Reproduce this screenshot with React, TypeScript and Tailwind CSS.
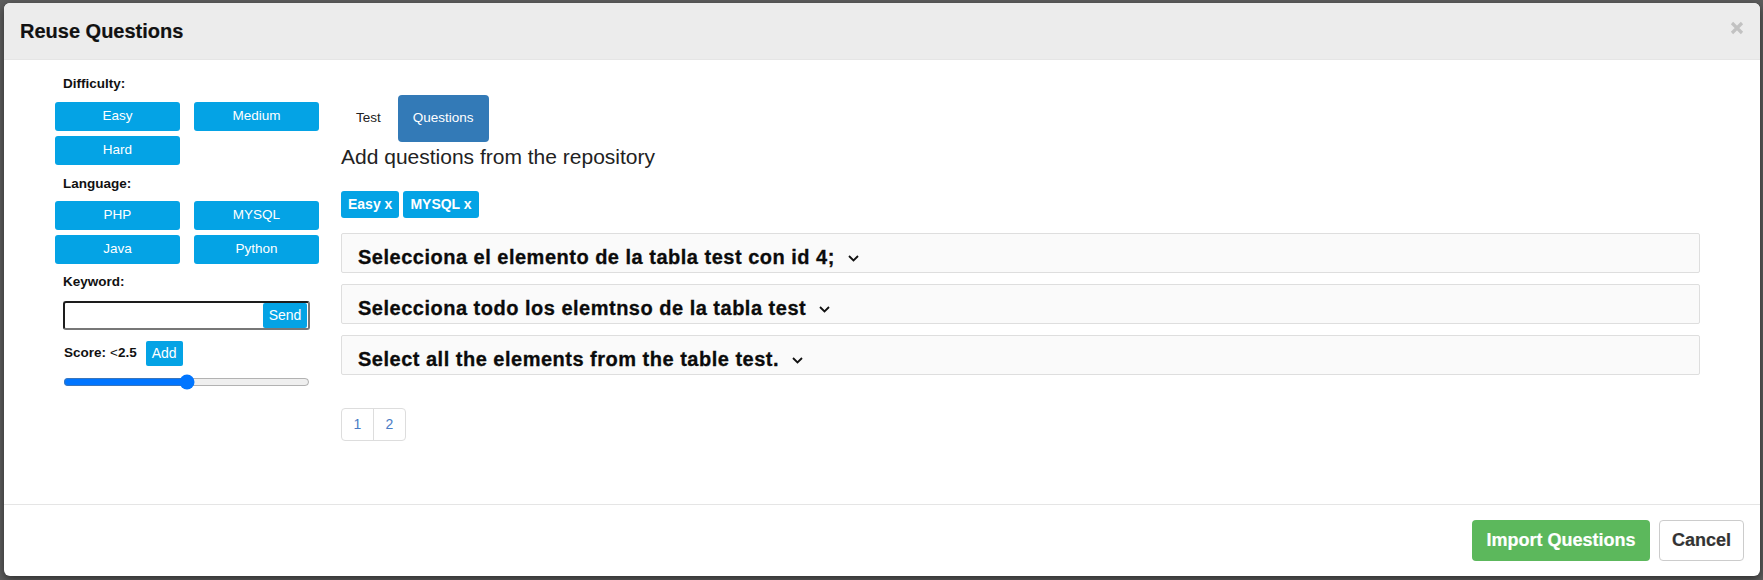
import React, { useState } from 'react';

const difficulties = ['Easy', 'Medium', 'Hard'];
const languages = ['PHP', 'MYSQL', 'Java', 'Python'];
const questions = [
  'Selecciona el elemento de la tabla test con id 4;',
  'Selecciona todo los elemtnso de la tabla test',
  'Select all the elements from the table test.',
];

const Chevron = () => (
  <svg width="11" height="7" viewBox="0 0 11 7" fill="none" className="ml-[13px] mt-[3px]">
    <polyline points="1,1 5.5,5.5 10,1" stroke="#111" strokeWidth="1.8" />
  </svg>
);

const FilterButton: React.FC<{ label: string }> = ({ label }) => (
  <button className="h-[29px] w-[125px] rounded-[3px] bg-[#04a3e5] text-[13.5px] text-white">{label}</button>
);

const App: React.FC = () => {
  const [score, setScore] = useState(2.5);

  return (
    <div className="h-[580px] w-[1763px] overflow-hidden bg-[#5d5d5d] pl-[4px] pt-[3px] font-['Liberation_Sans',Arial,sans-serif] text-[#111]">
      <div className="flex h-[573px] w-[1756px] flex-col overflow-hidden rounded-[6px] bg-white shadow-[0_3px_9px_rgba(0,0,0,0.5)]">
        {/* Header */}
        <div className="flex h-[57px] items-center justify-between border-b border-[#e5e5e5] bg-[#ececec] pl-[16px] pr-[16px]">
          <h3 className="text-[20px] font-bold text-[#111] [-webkit-text-stroke:0.2px_#111]">Reuse Questions</h3>
          <svg width="14" height="14" viewBox="0 0 14 14" className="mt-[-7px]">
            <path d="M2 2 L12 12 M12 2 L2 12" stroke="#c2c2c2" strokeWidth="3.2" />
          </svg>
        </div>

        {/* Body */}
        <div className="flex h-[444px] pl-[51px]">
          {/* Filters */}
          <div className="flex w-[264px] flex-col">
            <div className="mt-[16px] pl-[8px] text-[13.5px] leading-4 font-bold">Difficulty:</div>
            <div className="mt-[10px] grid grid-cols-[125px_125px] gap-x-[14px] gap-y-[5px]">
              {difficulties.map((d) => (
                <FilterButton key={d} label={d} />
              ))}
            </div>
            <div className="mt-[11px] pl-[8px] text-[13.5px] leading-4 font-bold">Language:</div>
            <div className="mt-[9px] grid grid-cols-[125px_125px] gap-x-[14px] gap-y-[5px]">
              {languages.map((l) => (
                <FilterButton key={l} label={l} />
              ))}
            </div>
            <div className="mt-[10px] pl-[8px] text-[13.5px] leading-4 font-bold">Keyword:</div>
            <div className="mt-[11px] ml-[8px] flex h-[29px] w-[247px] items-center rounded-[3px] border-2 border-[#1d1d1d] border-r-[#777] border-b-[#777] pr-[1px]">
              <input className="h-full min-w-0 flex-1 bg-transparent px-2 text-[14px] outline-none" />
              <button className="h-[25px] w-[44px] rounded-[2px] bg-[#04a3e5] text-[14px] text-white">Send</button>
            </div>
            <div className="mt-[11px] ml-[9px] flex h-[25px] items-center">
              <span className="text-[13.5px] font-bold">Score:</span>
              <span className="ml-[4px] text-[13.5px]">&lt;</span>
              <span className="text-[13.5px] font-bold">{score}</span>
              <button className="ml-[9px] h-[25px] w-[37px] rounded-[2px] bg-[#04a3e5] text-[14px] text-white">Add</button>
            </div>
            <input
              type="range"
              min={0}
              max={5}
              step={0.5}
              value={score}
              onChange={(e) => setScore(Number(e.target.value))}
              className="mt-[8px] ml-[8px] h-[16px] w-[247px] accent-[#0075ff]"
            />
          </div>

          {/* Repository */}
          <div className="ml-[22px] flex w-[1359px] flex-col">
            <div className="mt-[35px] flex h-[47px] items-center gap-[2px]">
              <span className="px-[15px] text-[13.5px] text-[#222]">Test</span>
              <span className="flex h-[47px] items-center rounded-[4px] bg-[#337ab7] px-[15px] text-[13.5px] text-white">Questions</span>
            </div>
            <h4 className="mt-[3px] text-[21px] leading-6 text-[#222]">Add questions from the repository</h4>
            <div className="mt-[22px] flex gap-[4px]">
              <span className="flex h-[27px] items-center rounded-[3px] bg-[#04a3e5] px-[7px] text-[14px] font-bold text-white">Easy x</span>
              <span className="flex h-[27px] items-center rounded-[3px] bg-[#04a3e5] px-[7px] text-[14px] font-bold text-white">MYSQL x</span>
            </div>
            <div className="mt-[15px] flex flex-col gap-[11px]">
              {questions.map((q) => (
                <div key={q} className="flex h-[40px] items-center rounded-[2px] border border-[#dedede] bg-[#fafafa] pl-[16px] pt-[8px]">
                  <span className="text-[20px] font-bold tracking-[0.5px] text-[#0b0b0b] [-webkit-text-stroke:0.3px_#0b0b0b]">{q}</span>
                  <Chevron />
                </div>
              ))}
            </div>
            <div className="mt-[33px] flex h-[33px] w-[65px] overflow-hidden rounded-[4px] border border-[#dddddd]">
              <span className="flex w-[32px] items-center justify-center border-r border-[#dddddd] text-[14px] text-[#4a7cc5]">1</span>
              <span className="flex flex-1 items-center justify-center text-[14px] text-[#4a7cc5]">2</span>
            </div>
          </div>
        </div>

        {/* Footer */}
        <div className="flex h-[72px] items-center justify-end gap-[9px] border-t border-[#e5e5e5] pr-[16px]">
          <button className="h-[41px] w-[178px] rounded-[4px] bg-[#5cb85c] text-[18px] font-bold text-white [-webkit-text-stroke:0.2px_#fff]">Import Questions</button>
          <button className="h-[41px] w-[85px] rounded-[4px] border border-[#cccccc] bg-white text-[18px] font-bold text-[#333] [-webkit-text-stroke:0.2px_#333]">Cancel</button>
        </div>
      </div>
    </div>
  );
};

export default App;
